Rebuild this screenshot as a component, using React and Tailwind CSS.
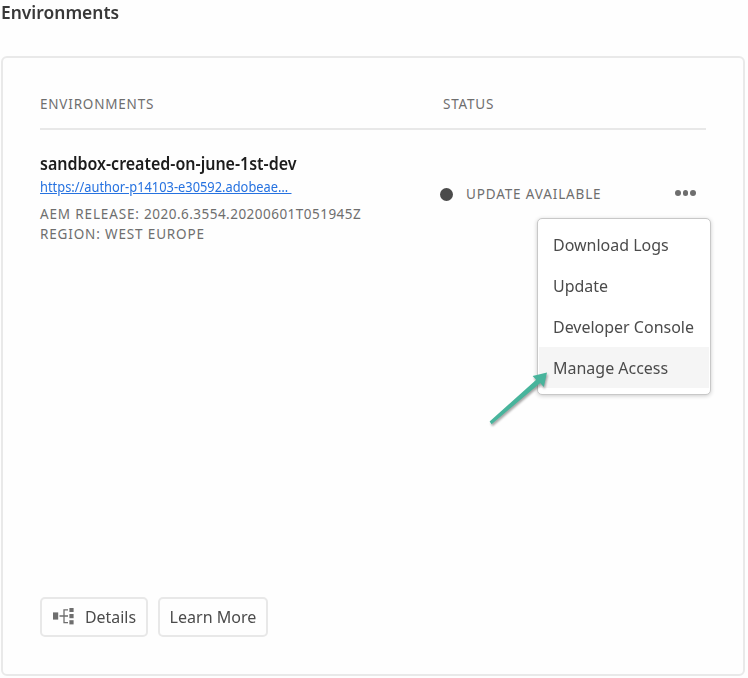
import React from "react";

const menuItems = ["Download Logs", "Update", "Developer Console", "Manage Access"];

function DetailsIcon() {
  return (
    <svg className="h-[18px] w-[22px] shrink-0" viewBox="0 0 22 18" fill="#6e6e6e">
      <rect x="0" y="4.4" width="5.2" height="7.2" />
      <rect x="16.4" y="-0.2" width="4.2" height="4.2" />
      <rect x="16.4" y="6" width="4.2" height="4.2" />
      <rect x="16.4" y="12.2" width="4.2" height="4.2" />
      <path d="M6.5 8H15M15 1.8H11V14.6H15" fill="none" stroke="#6e6e6e" strokeWidth="1.3" />
    </svg>
  );
}

function Arrow() {
  return (
    <svg
      className="absolute left-[484px] top-[366px] h-[66px] w-[72px] drop-shadow-[1px_2px_1px_rgba(0,0,0,0.35)]"
      viewBox="484 366 72 66"
    >
      <path
        d="M489.6 421.4L536.2 379.8L532.6 375.9L547 372.4L543.8 387L540.2 383.1L491.6 424.2Z"
        fill="#48b49c"
      />
    </svg>
  );
}

export default function App() {
  return (
    <div className="relative flex h-[678px] w-[748px] flex-col overflow-hidden bg-[#fefefe] pr-[3px] pl-px pb-[2px] font-['Noto_Sans',sans-serif] whitespace-nowrap text-[#4b4b4b]">
      <h2 className="h-[56px] origin-left scale-x-[0.968] text-[18px] leading-6 font-semibold text-[#383838]">
        Environments
      </h2>

      <section className="flex flex-1 flex-col rounded-[6px] border-2 border-[#e9e9e9] px-[37px] pb-[37px]">
        <div className="mt-[32px] flex h-[40px] border-b-2 border-[#e8e8e8] pt-1 text-[13.5px] leading-5 tracking-[0.8px] text-[#6e6e6e]">
          <div className="w-[403px]">ENVIRONMENTS</div>
          <div>STATUS</div>
        </div>

        <div className="flex pt-[22px]">
          <div className="w-[400px]">
            <div className="origin-left scale-x-[0.941] text-[17px] leading-6 font-semibold text-[#1c1c1c]">
              sandbox-created-on-june-1st-dev
            </div>
            <div className="mt-px origin-left scale-x-[0.918] text-[14px] leading-[20px] text-[#2672e0] underline">
              https://author-p14103-e30592.adobeae…&nbsp;
            </div>
            <div className="mt-[7px] text-[13.5px] leading-5 tracking-[0.85px] text-[#6e6e6e]">
              AEM RELEASE: <span className="tracking-[0.48px]">2020.6.3554.20200601T051945Z</span>
              <br />
              REGION: WEST EUROPE
            </div>
          </div>
          <div className="mt-[32px] flex h-5 flex-1 items-center">
            <span className="h-[13px] w-[13px] rounded-full bg-[#4b4b4b]" />
            <span className="ml-[13px] text-[13.5px] leading-5 tracking-[0.86px] text-[#6e6e6e]">UPDATE AVAILABLE</span>
            <span className="mr-[10.5px] mb-[2px] ml-auto flex gap-[2px]">
              <i className="h-[5.5px] w-[5.5px] rounded-full bg-[#6e6e6e]" />
              <i className="h-[5.5px] w-[5.5px] rounded-full bg-[#6e6e6e]" />
              <i className="h-[5.5px] w-[5.5px] rounded-full bg-[#6e6e6e]" />
            </span>
          </div>
        </div>

        <div className="mt-auto flex gap-[10px] text-[17px]">
          <button className="flex h-10 w-[108px] items-center gap-[10px] rounded-[5px] border-2 border-[#e8e8e8] pl-[11px]">
            <DetailsIcon />
            <span className="origin-left scale-x-[0.935]">Details</span>
          </button>
          <button className="flex h-10 w-[110px] items-center justify-center rounded-[5px] border-2 border-[#e8e8e8]">
            <span className="scale-x-[0.945]">Learn More</span>
          </button>
        </div>
      </section>

      <div className="absolute top-[218px] left-[537px] flex h-[177px] w-[174px] flex-col rounded-[5px] border-[1.5px] border-[#c8c8c8] bg-white px-px pt-[5px] shadow-[0_1px_4px_rgba(0,0,0,0.2)]">
        {menuItems.map((label) => (
          <div
            key={label}
            className={
              label === "Manage Access"
                ? "h-[41px] bg-[#f5f5f5] pl-[14px] text-[17px] leading-[41px]"
                : "h-[41px] pl-[14px] text-[17px] leading-[41px]"
            }
          >
            <div className="origin-left scale-x-[0.94]">{label}</div>
          </div>
        ))}
      </div>
      <Arrow />
    </div>
  );
}
